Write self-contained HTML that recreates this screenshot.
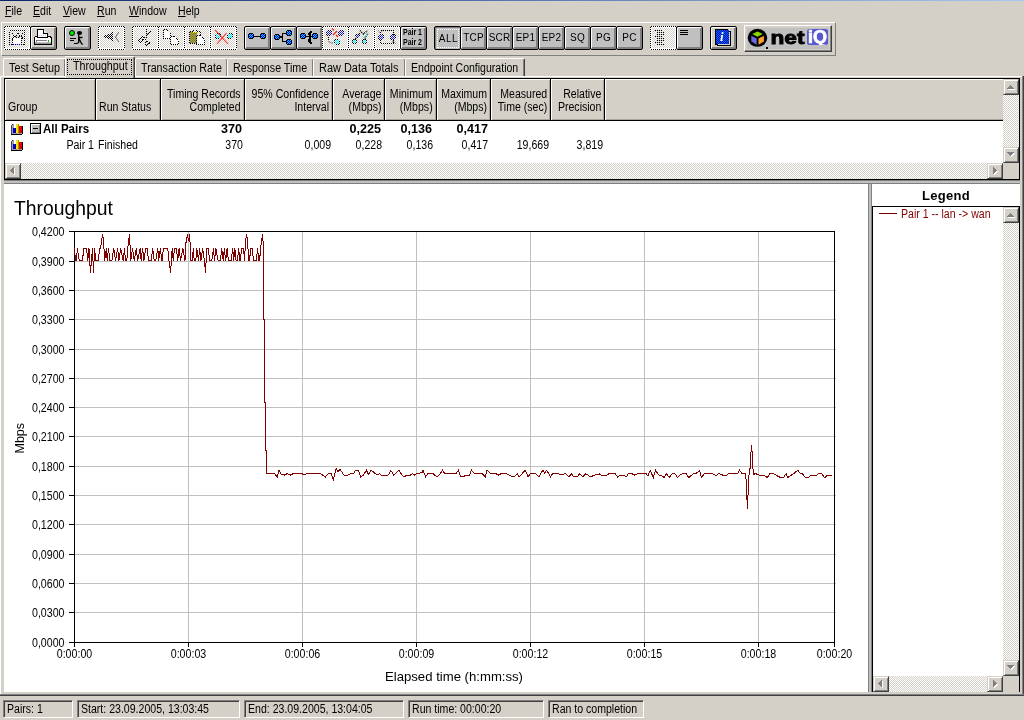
<!DOCTYPE html>
<html><head><meta charset="utf-8"><title>Throughput</title>
<style>
*{box-sizing:border-box;margin:0;padding:0}
html,body{width:1024px;height:720px;overflow:hidden;background:#d4d0c8}
body{position:relative;font-family:"Liberation Sans",sans-serif;font-size:12px;color:#000;line-height:13px}
.a{position:absolute}
.t{position:absolute;white-space:nowrap;transform:scaleX(.88);transform-origin:0 0}
.t.r{transform-origin:100% 0}
.sx{display:inline-block;transform:scaleX(.88);transform-origin:0 0}
u{text-decoration:underline;text-underline-offset:1px}
.chk{background-image:conic-gradient(#fff 25%,#d4d0c8 0 50%,#fff 0 75%,#d4d0c8 0);background-size:2px 2px}
/* toolbar buttons */
.b{position:absolute;top:26px;width:27px;height:24px;background:#c0c0c0;border:1px solid #000;border-radius:2px;box-shadow:inset 1px 1px 0 #fff,inset -1px -1px 0 #808080,inset -2px -2px 0 #808080}
.bd{position:absolute;top:26px;width:27px;height:24px;background:repeating-linear-gradient(90deg,#000 0 1px,#fff 1px 2px) 1px 0/25px 1px no-repeat,repeating-linear-gradient(90deg,#000 0 1px,#fff 1px 2px) 1px 100%/25px 1px no-repeat,repeating-linear-gradient(180deg,#000 0 1px,#fff 1px 2px) 0 1px/1px 22px no-repeat,repeating-linear-gradient(180deg,#000 0 1px,#fff 1px 2px) 100% 1px/1px 22px no-repeat,conic-gradient(#fff 25%,#d4d0c8 0 50%,#fff 0 75%,#d4d0c8 0) 0 0/2px 2px}
.bd:before{content:"";position:absolute;left:1px;top:1px;right:1px;bottom:1px;border:1px solid #fff}
.bd>svg{left:1px!important;top:1px!important}
.bt{font-size:10px;text-align:center;line-height:22px;letter-spacing:0.2px}
/* table */
.h{position:absolute;top:79px;height:41px;border-right:1px solid #000;box-shadow:inset 1px 1px 0 #fff,inset -1px -1px 0 #a8a49c;line-height:13px}
.r{text-align:right}
.tab{position:absolute;top:58px;height:18px;border-left:1px solid #fff;border-top:1px solid #fff;border-right:1px solid #404040;box-shadow:inset -1px 0 0 #808080;border-radius:2px 2px 0 0;font-size:12px;line-height:14px;white-space:nowrap;background:#d4d0c8}
.tab span{position:absolute;left:5px;top:2px;transform:scaleX(.89);transform-origin:0 0;letter-spacing:0}
.tab.sel{top:56px;height:22px}
.tab.sel span{left:7px;top:2px}
.sb{width:16px;height:16px;background:#d4d0c8;border:1px solid;border-color:#d4d0c8 #404040 #404040 #d4d0c8;box-shadow:inset 1px 1px 0 #fff,inset -1px -1px 0 #808080}
/* status panes */
.p{position:absolute;top:700px;height:18px;border:1px solid;border-color:#808080 #fff #fff #808080;box-shadow:inset 1px 1px 0 #404040;padding:2px 0 0 3px;white-space:nowrap}
#w{position:absolute;left:0;top:0;width:1024px;height:720px;will-change:transform}
</style></head><body><div id="w">
<!-- top line -->
<div class="a" style="left:0;top:0;width:1024px;height:1px;background:linear-gradient(90deg,#0a246a,#a6caf0)"></div>
<!-- menu -->
<div class="t" style="left:5px;top:5px"><u>F</u>ile</div>
<div class="t" style="left:33px;top:5px"><u>E</u>dit</div>
<div class="t" style="left:63px;top:5px"><u>V</u>iew</div>
<div class="t" style="left:97px;top:5px"><u>R</u>un</div>
<div class="t" style="left:129px;top:5px"><u>W</u>indow</div>
<div class="t" style="left:178px;top:5px"><u>H</u>elp</div>
<!-- toolbar frame -->
<div class="a" id="tb" style="left:1px;top:22px;width:835px;height:34px;border:1px solid;border-color:#fff #808080 #808080 #fff"></div>
<!-- TOOLBAR-BUTTONS -->
<svg width="0" height="0" style="position:absolute"><defs><pattern id="pb" width="2" height="2" patternUnits="userSpaceOnUse"><rect width="2" height="2" fill="#0000ff"/><rect width="1" height="1" fill="#00d0ff"/><rect x="1" y="1" width="1" height="1" fill="#00d0ff"/></pattern><pattern id="pd" width="2" height="2" patternUnits="userSpaceOnUse"><rect width="2" height="2" fill="#e8e8ff"/><rect width="1" height="1" fill="#2020ff"/><rect x="1" y="1" width="1" height="1" fill="#2020ff"/></pattern><pattern id="pc" width="2" height="2" patternUnits="userSpaceOnUse"><rect width="2" height="2" fill="#c8ffff"/><rect width="1" height="1" fill="#00f0ff"/><rect x="1" y="1" width="1" height="1" fill="#00f0ff"/></pattern><pattern id="pk" width="2" height="2" patternUnits="userSpaceOnUse"><rect width="1" height="1" fill="#000"/><rect x="1" y="1" width="1" height="1" fill="#000"/></pattern><pattern id="po" width="2" height="2" patternUnits="userSpaceOnUse"><rect width="2" height="2" fill="#a0a050"/><rect width="1" height="1" fill="#808020"/><rect x="1" y="1" width="1" height="1" fill="#808020"/></pattern><pattern id="pi" width="2" height="2" patternUnits="userSpaceOnUse"><rect width="2" height="2" fill="#0000ff"/><rect width="1" height="1" fill="#0070b0"/><rect x="1" y="1" width="1" height="1" fill="#0070b0"/></pattern></defs></svg>
<div class="bd chk" style="left:4px;"><svg class="a" style="left:0;top:0" width="25" height="22" viewBox="0 0 25 22" shape-rendering="crispEdges" ><g fill="none" stroke="#000" stroke-dasharray="1 1"><path d="M4.500 3.500h15v14h-15z"/><path d="M7 6.500l6 6M13 6.500l-6 6M13 6.500l5 5M18 6.500l-5 5"/></g><rect x="8" y="11" width="8" height="6" fill="#fff"/><path d="M7.500 11v7M16.500 11v7" stroke="#000" stroke-dasharray="1 1"/><path d="M8 17.500h8" stroke="#0000ff" stroke-dasharray="1 1"/></svg></div>
<div class="b" style="left:30px;background:#d4d0c8"><svg class="a" style="left:0;top:0" width="25" height="22" viewBox="0 0 25 22" shape-rendering="crispEdges" ><path d="M6.500 9.500v-7h6l4 4v3" fill="#fff" stroke="#000"/><path d="M12.500 2.500v4h4" fill="#e8e8e8" stroke="#000"/><path d="M8 8.500h8" stroke="#d0d0d0" stroke-dasharray="1 1"/><path d="M3.500 10.500l1-1h2v1h10v-1h2l2 1v7h-17z" fill="#fff" stroke="#000"/><path d="M4 15.500h16" stroke="#c0c0c0"/><path d="M4 16.500h16" stroke="#909090"/><path d="M5 13.500h11M5.500 13v2" stroke="#808080" fill="none"/><rect x="17" y="13" width="1" height="2" fill="#00c000"/></svg></div>
<div class="b" style="left:64px;"><svg class="a" style="left:0;top:0" width="25" height="22" viewBox="0 0 25 22" shape-rendering="crispEdges" ><g shape-rendering="auto"><circle cx="7" cy="6" r="2.500" fill="#00f000" stroke="#000"/><ellipse cx="14.500" cy="6" rx="2.600" ry="2.100" fill="#000"/><path d="M13.700 7.500V15.500L12 16.500M13.500 10.500H17.500M14 11.500L16.500 16.500L17.800 17.500" stroke="#000" fill="none" stroke-width="1.300"/></g><path d="M5 11.500h6M5 13.500h4M9 16.500h3" stroke="#000"/></svg></div>
<div class="bd chk" style="left:98px;"><svg class="a" style="left:0;top:0" width="25" height="22" viewBox="0 0 25 22" shape-rendering="crispEdges" ><path d="M4 9.500l10-4.500v9z" fill="url(#pk)"/><path d="M19.500 5.500l-3 4.500 3 4.500" fill="none" stroke="#000" stroke-dasharray="1.400 1" shape-rendering="auto"/></svg></div>
<div class="bd chk" style="left:132px;"><svg class="a" style="left:0;top:0" width="25" height="22" viewBox="0 0 25 22" shape-rendering="crispEdges" ><rect x="5" y="13" width="1" height="1"/><rect x="6" y="12" width="1" height="1"/><rect x="6" y="14" width="1" height="1"/><rect x="7" y="11" width="1" height="1"/><rect x="7" y="15" width="1" height="1"/><rect x="8" y="10" width="1" height="1"/><rect x="8" y="14" width="1" height="1"/><rect x="9" y="9" width="1" height="1"/><rect x="9" y="12" width="1" height="1"/><rect x="9" y="13" width="1" height="1"/><rect x="10" y="10" width="1" height="1"/><rect x="10" y="12" width="1" height="1"/><rect x="11" y="10" width="1" height="1"/><rect x="12" y="12" width="1" height="1"/><rect x="12" y="15" width="1" height="1"/><rect x="12" y="17" width="1" height="1"/><rect x="13" y="2" width="1" height="1"/><rect x="13" y="4" width="1" height="1"/><rect x="13" y="6" width="1" height="1"/><rect x="13" y="8" width="1" height="1"/><rect x="13" y="10" width="1" height="1"/><rect x="13" y="14" width="1" height="1"/><rect x="13" y="18" width="1" height="1"/><rect x="14" y="7" width="1" height="1"/><rect x="14" y="14" width="1" height="1"/><rect x="14" y="17" width="1" height="1"/><rect x="15" y="6" width="1" height="1"/><rect x="15" y="16" width="1" height="1"/><rect x="16" y="5" width="1" height="1"/><rect x="16" y="15" width="1" height="1"/><rect x="16" y="16" width="1" height="1"/><rect x="17" y="4" width="1" height="1"/></svg></div>
<div class="bd chk" style="left:158px;"><svg class="a" style="left:0;top:0" width="25" height="22" viewBox="0 0 25 22" shape-rendering="crispEdges" ><g fill="#fff" stroke="#000" stroke-dasharray="1 1"><path d="M4.500 2.500h3l4 4v5h-7z"/><path d="M11.500 9.500h4l4 4v4h-8z"/></g></svg></div>
<div class="bd chk" style="left:184px;"><svg class="a" style="left:0;top:0" width="25" height="22" viewBox="0 0 25 22" shape-rendering="crispEdges" ><rect x="5" y="5" width="7" height="11" fill="url(#po)"/><path d="M4.500 4.500h3l2.500-2.500 2.500 2.500h3v4M4.500 5v11.500h7" fill="none" stroke="#000" stroke-dasharray="1 1"/><path d="M8 5.500h5" stroke="#ffff00" stroke-dasharray="1 1"/><g fill="#fff" stroke="#000" stroke-dasharray="1 1"><path d="M11.500 8.500h4l4 4v5h-8z"/></g></svg></div>
<div class="bd chk" style="left:210px;"><svg class="a" style="left:0;top:0" width="25" height="22" viewBox="0 0 25 22" shape-rendering="crispEdges" ><rect x="5" y="6" width="4" height="6" fill="url(#pk)"/><rect x="4" y="7" width="6" height="4" fill="url(#pk)"/><rect x="5" y="7" width="4" height="4" fill="#fff"/><rect x="5" y="7" width="4" height="4" fill="url(#pc)"/><rect x="17" y="6" width="4" height="6" fill="url(#pk)"/><rect x="16" y="7" width="6" height="4" fill="url(#pk)"/><rect x="17" y="7" width="4" height="4" fill="#fff"/><rect x="17" y="7" width="4" height="4" fill="url(#pc)"/><path d="M4 3l13 14M15.500 6l-9.500 11" stroke="#ff2020" stroke-width="1.100" shape-rendering="auto"/></svg></div>
<div class="b" style="left:244px;"><svg class="a" style="left:0;top:0" width="25" height="22" viewBox="0 0 25 22" shape-rendering="crispEdges" ><path d="M9 9.500h6" stroke="#000"/><rect x="4" y="6" width="4" height="6" fill="#000"/><rect x="3" y="7" width="6" height="4" fill="#000"/><rect x="4" y="7" width="4" height="4" fill="url(#pb)"/><rect x="16" y="6" width="4" height="6" fill="#000"/><rect x="15" y="7" width="6" height="4" fill="#000"/><rect x="16" y="7" width="4" height="4" fill="url(#pb)"/></svg></div>
<div class="b" style="left:270px;"><svg class="a" style="left:0;top:0" width="25" height="22" viewBox="0 0 25 22" shape-rendering="crispEdges" ><path d="M11.500 6v9M11 6.500h4M11 14.500h4" stroke="#000" fill="none"/><rect x="9" y="9" width="3" height="2" fill="#000"/><rect x="4" y="7" width="4" height="6" fill="#000"/><rect x="3" y="8" width="6" height="4" fill="#000"/><rect x="4" y="8" width="4" height="4" fill="url(#pb)"/><rect x="16" y="3" width="4" height="6" fill="#000"/><rect x="15" y="4" width="6" height="4" fill="#000"/><rect x="16" y="4" width="4" height="4" fill="url(#pb)"/><rect x="16" y="12" width="4" height="6" fill="#000"/><rect x="15" y="13" width="6" height="4" fill="#000"/><rect x="16" y="13" width="4" height="4" fill="url(#pb)"/></svg></div>
<div class="b" style="left:296px;"><svg class="a" style="left:0;top:0" width="25" height="22" viewBox="0 0 25 22" shape-rendering="crispEdges" ><path d="M13 4h2v2h-1v9h1v2h-2l-2-2v-3h1v-4h-1v-2z" fill="#000"/><path d="M9 9.500h6" stroke="#000"/><rect x="4" y="6" width="4" height="6" fill="#000"/><rect x="3" y="7" width="6" height="4" fill="#000"/><rect x="4" y="7" width="4" height="4" fill="url(#pb)"/><rect x="16" y="6" width="4" height="6" fill="#000"/><rect x="15" y="7" width="6" height="4" fill="#000"/><rect x="16" y="7" width="4" height="4" fill="url(#pb)"/></svg></div>
<div class="bd chk" style="left:322px;"><svg class="a" style="left:0;top:0" width="25" height="22" viewBox="0 0 25 22" shape-rendering="crispEdges" ><rect x="4" y="3" width="4" height="6" fill="url(#pk)"/><rect x="3" y="4" width="6" height="4" fill="url(#pk)"/><rect x="4" y="4" width="4" height="4" fill="#fff"/><rect x="4" y="4" width="4" height="4" fill="url(#pd)"/><rect x="16" y="3" width="4" height="6" fill="url(#pk)"/><rect x="15" y="4" width="6" height="4" fill="url(#pk)"/><rect x="16" y="4" width="4" height="4" fill="#fff"/><rect x="16" y="4" width="4" height="4" fill="url(#pd)"/><rect x="12" y="12" width="4" height="6" fill="url(#pk)"/><rect x="11" y="13" width="6" height="4" fill="url(#pk)"/><rect x="12" y="13" width="4" height="4" fill="#fff"/><rect x="12" y="13" width="4" height="4" fill="url(#pc)"/><path d="M9 1.500l2 2M14 4l-4 4M13 8l2 2" stroke="#ff2020" stroke-width="1.200" shape-rendering="auto"/><path d="M5.500 10v4l2 2h3" fill="none" stroke="#000" stroke-dasharray="1 1" shape-rendering="auto"/></svg></div>
<div class="bd chk" style="left:348px;"><svg class="a" style="left:0;top:0" width="25" height="22" viewBox="0 0 25 22" shape-rendering="crispEdges" ><path d="M4 15l7-9M14 15l5-9M11 3.500l3.500 3.500 4-3.500" fill="none" stroke="#000" stroke-dasharray="1 1" stroke-width="1.500" shape-rendering="auto"/><rect x="7" y="7" width="3" height="4" fill="url(#pk)"/><rect x="6" y="8" width="5" height="2" fill="url(#pk)"/><rect x="7" y="8" width="3" height="2" fill="#fff"/><rect x="7" y="8" width="3" height="2" fill="url(#pd)"/><rect x="4" y="12" width="3" height="5" fill="url(#pk)"/><rect x="3" y="13" width="5" height="3" fill="url(#pk)"/><rect x="4" y="13" width="3" height="3" fill="#fff"/><rect x="4" y="13" width="3" height="3" fill="url(#pc)"/><rect x="14" y="12" width="3" height="5" fill="url(#pk)"/><rect x="13" y="13" width="5" height="3" fill="url(#pk)"/><rect x="14" y="13" width="3" height="3" fill="#fff"/><rect x="14" y="13" width="3" height="3" fill="url(#pc)"/><path d="M15 11l3-4" stroke="#00f0ff" stroke-dasharray="1 1" stroke-width="1.500" shape-rendering="auto"/></svg></div>
<div class="bd chk" style="left:374px;"><svg class="a" style="left:0;top:0" width="25" height="22" viewBox="0 0 25 22" shape-rendering="crispEdges" ><path d="M5.500 3.500h13v13h-13z" fill="none" stroke="#000" stroke-dasharray="1 1"/><path d="M3.500 3.500l2 2.500 2-2.500M16.500 16.500l2-2.500 2 2.500" fill="none" stroke="#000" stroke-dasharray="1 1" shape-rendering="auto"/><rect x="4" y="7" width="4" height="6" fill="url(#pk)"/><rect x="3" y="8" width="6" height="4" fill="url(#pk)"/><rect x="4" y="8" width="4" height="4" fill="#fff"/><rect x="4" y="8" width="4" height="4" fill="url(#pd)"/><rect x="16" y="7" width="4" height="6" fill="url(#pk)"/><rect x="15" y="8" width="6" height="4" fill="url(#pk)"/><rect x="16" y="8" width="4" height="4" fill="#fff"/><rect x="16" y="8" width="4" height="4" fill="url(#pd)"/></svg></div>
<div class="b" style="left:400px;"><div class="t" style="left:2px;top:0px;font-size:8.500px;line-height:10px;font-weight:bold;transform:scaleX(.82)">Pair 1<br>Pair 2</div></div>
<div class="b" style="left:434px;box-shadow:inset 1px 1px 0 #808080"><div class="a" style="left:2px;top:2px;width:22px;height:19px;border:1px dotted #fff"></div><div class="bt" style="padding:1px 0 0 2px;letter-spacing:.5px">ALL</div></div>
<div class="b" style="left:460px;"><div class="bt">TCP</div></div>
<div class="b" style="left:486px;"><div class="bt">SCR</div></div>
<div class="b" style="left:512px;"><div class="bt">EP1</div></div>
<div class="b" style="left:538px;"><div class="bt">EP2</div></div>
<div class="b" style="left:564px;"><div class="bt">SQ</div></div>
<div class="b" style="left:590px;"><div class="bt">PG</div></div>
<div class="b" style="left:616px;"><div class="bt">PC</div></div>
<div class="bd chk" style="left:650px;"><svg class="a" style="left:0;top:0" width="25" height="22" viewBox="0 0 25 22" shape-rendering="crispEdges" ><path d="M6.500 3v16" stroke="#000" stroke-dasharray="1 1"/><path d="M8.500 3v16" stroke="#000" stroke-dasharray="1 1"/><path d="M10.500 3v16" stroke="#000" stroke-dasharray="1 1"/><path d="M4.500 3v1M4.500 9v1M4.500 15v1M12.500 5v3M12.500 11v3M12.500 17v1" stroke="#000" stroke-dasharray="1 1"/></svg></div>
<div class="b" style="left:676px;"><svg class="a" style="left:0;top:0" width="25" height="22" viewBox="0 0 25 22" shape-rendering="crispEdges" ><path d="M3 3.500h8M3 5.500h8M3 7.500h8" stroke="#000"/></svg></div>
<div class="b" style="left:710px;background:#d4d0c8"><svg class="a" style="left:0;top:0" width="25" height="22" viewBox="0 0 25 22" shape-rendering="crispEdges" ><rect x="6.500" y="4.500" width="13" height="14" fill="#d4d0c8" stroke="#000"/><rect x="5" y="3" width="13" height="14" fill="url(#pi)"/><path d="M17 2.500h-12.500v15h1" stroke="#000" fill="none"/></svg><div class="t" style="transform:none;left:9px;top:3px;color:#fff;font:italic bold 13px/14px 'Liberation Serif',serif">i</div></div>
<div class="a" style="left:744px;top:25px;width:88px;height:27px;background:#c0c0c0;border:1px solid;border-color:#fff #404040 #404040 #fff;box-shadow:inset -1px -1px 0 #808080,inset 0 0 0 2px #d4d0c8"><svg class="a" style="left:0;top:0" width="86" height="25" viewBox="745 26 86 25"><ellipse cx="757.500" cy="37.800" rx="9.800" ry="9" fill="#000"/><path d="M757.500 31.500l5.200 2.600-5.200 2.700-5.200-2.700z" fill="#88d800"/><path d="M751.300 35.800l5.400 2.700v6.300l-5.400-3.200z" fill="#6868e0"/><path d="M763.900 35.800l-5.400 2.700v6.300l5.400-3.200z" fill="#ffa030"/><rect x="766" y="47" width="2" height="2" fill="#000"/><clipPath id="cq"><rect x="807" y="29" width="21" height="16" rx="2.500"/></clipPath><rect x="807" y="29" width="21" height="16" rx="2.500" fill="#5858d0"/><text x="770.500" y="44" font-family="Liberation Sans, sans-serif" font-weight="bold" font-size="19" textLength="34" lengthAdjust="spacingAndGlyphs" stroke="#000" stroke-width="0.900">net</text><text clip-path="url(#cq)" x="808" y="43.300" font-family="Liberation Sans, sans-serif" font-weight="bold" font-size="17.500" textLength="19" lengthAdjust="spacingAndGlyphs" fill="#fff" stroke="#fff" stroke-width="0.700">iQ</text></svg></div>
<!-- /TOOLBAR-BUTTONS -->
<!-- TABS -->
<div class="a" style="left:0;top:76px;width:1022px;height:1px;background:#fff"></div>
<div class="a" style="left:1022px;top:76px;width:1px;height:619px;background:#808080"></div><div class="a" style="left:1023px;top:76px;width:1px;height:620px;background:#404040"></div>
<div class="a" style="left:0;top:76px;width:1px;height:618px;background:#fff"></div>
<div class="tab" style="left:3px;width:63px"><span style="transform:scaleX(0.9)">Test Setup</span></div>
<div class="tab" style="left:135px;width:93px"><span style="transform:scaleX(0.89)">Transaction Rate</span></div>
<div class="tab" style="left:227px;width:87px"><span style="transform:scaleX(0.89)">Response Time</span></div>
<div class="tab" style="left:313px;width:93px"><span style="transform:scaleX(0.912)">Raw Data Totals</span></div>
<div class="tab" style="left:405px;width:120px"><span style="transform:scaleX(0.878)">Endpoint Configuration</span></div>
<div class="tab sel" style="left:65px;width:70px"><div class="a" style="left:1px;top:2px;width:65px;height:16px;border:1px dotted #000"></div><span>Throughput</span></div>
<!-- /TABS -->
<!-- TABLE -->
<div class="a" style="left:4px;top:78px;width:1016px;height:102px;border:1px solid #000;background:#fff"></div>
<div class="a" style="left:5px;top:79px;width:998px;height:41px;background:#d4d0c8"></div><div class="a" style="left:605px;top:79px;width:398px;height:41px;box-shadow:inset 1px 1px 0 #fff,inset 0 -1px 0 #a8a49c"></div>
<div class="a" style="left:5px;top:120px;width:998px;height:1px;background:#000"></div>
<div class="h" style="left:5px;width:91px"><div class="t" style="left:3px;bottom:6px">Group</div></div>
<div class="h" style="left:96px;width:65px"><div class="t" style="left:3px;bottom:6px">Run Status</div></div>
<div class="h" style="left:161px;width:84px"><div class="t r" style="right:3px;bottom:6px">Timing Records<br>Completed</div></div>
<div class="h" style="left:245px;width:88px"><div class="t r" style="right:3px;bottom:6px">95% Confidence<br>Interval</div></div>
<div class="h" style="left:333px;width:52px"><div class="t r" style="right:3px;bottom:6px">Average<br>(Mbps)</div></div>
<div class="h" style="left:385px;width:52px"><div class="t r" style="right:3px;bottom:6px">Minimum<br>(Mbps)</div></div>
<div class="h" style="left:437px;width:54px"><div class="t r" style="right:3px;bottom:6px">Maximum<br>(Mbps)</div></div>
<div class="h" style="left:491px;width:60px"><div class="t r" style="right:3px;bottom:6px">Measured<br>Time (sec)</div></div>
<div class="h" style="left:551px;width:54px"><div class="t r" style="right:3px;bottom:6px">Relative<br>Precision</div></div>
<svg class="a" style="left:11px;top:123px" width="12" height="12" viewBox="0 0 12 12" shape-rendering="crispEdges"><path d="M0.500 11V2.500L2 1V10" fill="none" stroke="#404040" shape-rendering="auto"/><path d="M1 10.500h10" stroke="#a0a0a0"/><path d="M0 11.500h11M11.500 3v8" stroke="#000" fill="none"/><rect x="2" y="5" width="3" height="5" fill="#0000e8"/><rect x="5" y="1" width="3" height="9" fill="#f0e800"/><rect x="8" y="3" width="3" height="7" fill="#e80000"/><path d="M4.500 5v5M7.500 1v9" stroke="#000" opacity=".35"/></svg>
<svg class="a" style="left:11px;top:139px" width="12" height="12" viewBox="0 0 12 12" shape-rendering="crispEdges"><path d="M0.500 11V2.500L2 1V10" fill="none" stroke="#404040" shape-rendering="auto"/><path d="M1 10.500h10" stroke="#a0a0a0"/><path d="M0 11.500h11M11.500 3v8" stroke="#000" fill="none"/><rect x="2" y="5" width="3" height="5" fill="#0000e8"/><rect x="5" y="1" width="3" height="9" fill="#f0e800"/><rect x="8" y="3" width="3" height="7" fill="#e80000"/><path d="M4.500 5v5M7.500 1v9" stroke="#000" opacity=".35"/></svg>
<div class="a" style="left:30px;top:123px;width:11px;height:11px;border:1px solid #000;background:#c0c0c0;box-shadow:inset 1px 1px 0 #fff,inset -1px -1px 0 #808080"><div class="a" style="left:2px;top:4px;width:5px;height:1px;background:#000"></div></div>
<div class="t" style="left:43px;top:123px;font-weight:bold;transform:scaleX(.96)">All Pairs</div>
<div class="t r" style="left:162px;width:80px;top:123px;font-weight:bold;transform:scaleX(1.05)">370</div>
<div class="t r" style="left:301px;width:80px;top:123px;font-weight:bold;transform:scaleX(1.05)">0,225</div>
<div class="t r" style="left:352px;width:80px;top:123px;font-weight:bold;transform:scaleX(1.05)">0,136</div>
<div class="t r" style="left:408px;width:80px;top:123px;font-weight:bold;transform:scaleX(1.05)">0,417</div>
<div class="t r" style="left:14px;width:80px;top:139px">Pair 1</div>
<div class="t" style="left:98px;top:139px">Finished</div>
<div class="t r" style="left:163px;width:80px;top:139px">370</div>
<div class="t r" style="left:251px;width:80px;top:139px">0,009</div>
<div class="t r" style="left:302px;width:80px;top:139px">0,228</div>
<div class="t r" style="left:353px;width:80px;top:139px">0,136</div>
<div class="t r" style="left:408px;width:80px;top:139px">0,417</div>
<div class="t r" style="left:469px;width:80px;top:139px">19,669</div>
<div class="t r" style="left:523px;width:80px;top:139px">3,819</div>
<div class="a chk" style="left:1003px;top:79px;width:16px;height:84px"></div>
<div class="a chk" style="left:5px;top:163px;width:998px;height:16px"></div>
<div class="a" style="left:1003px;top:163px;width:16px;height:16px;background:#d4d0c8"></div>
<div class="a sb" style="left:1003px;top:79px"><svg class="a" style="left:-1px;top:-1px" width="16" height="16" viewBox="0 0 16 16" shape-rendering="crispEdges"><rect x="8" y="7" width="1" height="1" fill="#fff"/><rect x="7" y="8" width="3" height="1" fill="#fff"/><rect x="6" y="9" width="5" height="1" fill="#fff"/><rect x="5" y="10" width="7" height="1" fill="#fff"/><rect x="7" y="6" width="1" height="1" fill="#808080"/><rect x="6" y="7" width="3" height="1" fill="#808080"/><rect x="5" y="8" width="5" height="1" fill="#808080"/><rect x="4" y="9" width="7" height="1" fill="#808080"/></svg></div>
<div class="a sb" style="left:1003px;top:147px"><svg class="a" style="left:-1px;top:-1px" width="16" height="16" viewBox="0 0 16 16" shape-rendering="crispEdges"><rect x="8" y="9" width="1" height="1" fill="#fff"/><rect x="7" y="8" width="3" height="1" fill="#fff"/><rect x="6" y="7" width="5" height="1" fill="#fff"/><rect x="5" y="6" width="7" height="1" fill="#fff"/><rect x="7" y="8" width="1" height="1" fill="#808080"/><rect x="6" y="7" width="3" height="1" fill="#808080"/><rect x="5" y="6" width="5" height="1" fill="#808080"/><rect x="4" y="5" width="7" height="1" fill="#808080"/></svg></div>
<div class="a sb" style="left:5px;top:163px"><svg class="a" style="left:-1px;top:-1px" width="16" height="16" viewBox="0 0 16 16" shape-rendering="crispEdges"><rect x="6" y="8" width="1" height="1" fill="#fff"/><rect x="7" y="7" width="1" height="3" fill="#fff"/><rect x="8" y="6" width="1" height="5" fill="#fff"/><rect x="9" y="5" width="1" height="7" fill="#fff"/><rect x="5" y="7" width="1" height="1" fill="#808080"/><rect x="6" y="6" width="1" height="3" fill="#808080"/><rect x="7" y="5" width="1" height="5" fill="#808080"/><rect x="8" y="4" width="1" height="7" fill="#808080"/></svg></div>
<div class="a sb" style="left:987px;top:163px"><svg class="a" style="left:-1px;top:-1px" width="16" height="16" viewBox="0 0 16 16" shape-rendering="crispEdges"><rect x="10" y="8" width="1" height="1" fill="#fff"/><rect x="9" y="7" width="1" height="3" fill="#fff"/><rect x="8" y="6" width="1" height="5" fill="#fff"/><rect x="7" y="5" width="1" height="7" fill="#fff"/><rect x="9" y="7" width="1" height="1" fill="#808080"/><rect x="8" y="6" width="1" height="3" fill="#808080"/><rect x="7" y="5" width="1" height="5" fill="#808080"/><rect x="6" y="4" width="1" height="7" fill="#808080"/></svg></div>
<!-- /TABLE -->
<!-- CHART -->
<div class="a" style="left:4px;top:180px;width:1016px;height:4px;background:#c0c0c0;border-top:1px solid #808080;border-bottom:1px solid #808080"></div>
<div class="a" style="left:4px;top:184px;width:864px;height:508px;background:#fff"></div>
<div class="a" style="left:868px;top:184px;width:4px;height:508px;background:#c0c0c0;border-left:1px solid #808080;border-right:1px solid #808080"></div>
<svg class="a" style="left:0;top:184px" width="868" height="508" viewBox="0 184 868 508" font-family="Liberation Sans, sans-serif">
<path d="M74 612.5H836M74 583.5H836M74 554.5H836M74 524.5H836M74 495.5H836M74 466.5H836M74 436.5H836M74 407.5H836M74 378.5H836M74 349.5H836M74 319.5H836M74 290.5H836M74 261.5H836M188.5 231V642M302.5 231V642M416.5 231V642M530.5 231V642M644.5 231V642M758.5 231V642" stroke="#c0c0c0" fill="none" shape-rendering="crispEdges"/>
<path d="M74.5 231V647M69 642.5H835M74 231.5H835M834.5 231V642M69 612.5H74M69 583.5H74M69 554.5H74M69 524.5H74M69 495.5H74M69 466.5H74M69 436.5H74M69 407.5H74M69 378.5H74M69 349.5H74M69 319.5H74M69 290.5H74M69 261.5H74M69 231.5H74M188.5 642V647M302.5 642V647M416.5 642V647M530.5 642V647M644.5 642V647M758.5 642V647M834.5 642V647" stroke="#000" fill="none" shape-rendering="crispEdges"/>
<text x="64.500" y="647" font-size="12.300" text-anchor="end" textLength="32.500" lengthAdjust="spacingAndGlyphs">0,0000</text>
<text x="64.500" y="617" font-size="12.300" text-anchor="end" textLength="32.500" lengthAdjust="spacingAndGlyphs">0,0300</text>
<text x="64.500" y="588" font-size="12.300" text-anchor="end" textLength="32.500" lengthAdjust="spacingAndGlyphs">0,0600</text>
<text x="64.500" y="559" font-size="12.300" text-anchor="end" textLength="32.500" lengthAdjust="spacingAndGlyphs">0,0900</text>
<text x="64.500" y="529" font-size="12.300" text-anchor="end" textLength="32.500" lengthAdjust="spacingAndGlyphs">0,1200</text>
<text x="64.500" y="500" font-size="12.300" text-anchor="end" textLength="32.500" lengthAdjust="spacingAndGlyphs">0,1500</text>
<text x="64.500" y="471" font-size="12.300" text-anchor="end" textLength="32.500" lengthAdjust="spacingAndGlyphs">0,1800</text>
<text x="64.500" y="441" font-size="12.300" text-anchor="end" textLength="32.500" lengthAdjust="spacingAndGlyphs">0,2100</text>
<text x="64.500" y="412" font-size="12.300" text-anchor="end" textLength="32.500" lengthAdjust="spacingAndGlyphs">0,2400</text>
<text x="64.500" y="383" font-size="12.300" text-anchor="end" textLength="32.500" lengthAdjust="spacingAndGlyphs">0,2700</text>
<text x="64.500" y="354" font-size="12.300" text-anchor="end" textLength="32.500" lengthAdjust="spacingAndGlyphs">0,3000</text>
<text x="64.500" y="324" font-size="12.300" text-anchor="end" textLength="32.500" lengthAdjust="spacingAndGlyphs">0,3300</text>
<text x="64.500" y="295" font-size="12.300" text-anchor="end" textLength="32.500" lengthAdjust="spacingAndGlyphs">0,3600</text>
<text x="64.500" y="266" font-size="12.300" text-anchor="end" textLength="32.500" lengthAdjust="spacingAndGlyphs">0,3900</text>
<text x="64.500" y="236" font-size="12.300" text-anchor="end" textLength="32.500" lengthAdjust="spacingAndGlyphs">0,4200</text>
<text x="74.5" y="658" font-size="12.300" text-anchor="middle" textLength="35.500" lengthAdjust="spacingAndGlyphs">0:00:00</text>
<text x="188.5" y="658" font-size="12.300" text-anchor="middle" textLength="35.500" lengthAdjust="spacingAndGlyphs">0:00:03</text>
<text x="302.5" y="658" font-size="12.300" text-anchor="middle" textLength="35.500" lengthAdjust="spacingAndGlyphs">0:00:06</text>
<text x="416.5" y="658" font-size="12.300" text-anchor="middle" textLength="35.500" lengthAdjust="spacingAndGlyphs">0:00:09</text>
<text x="530.5" y="658" font-size="12.300" text-anchor="middle" textLength="35.500" lengthAdjust="spacingAndGlyphs">0:00:12</text>
<text x="644.5" y="658" font-size="12.300" text-anchor="middle" textLength="35.500" lengthAdjust="spacingAndGlyphs">0:00:15</text>
<text x="758.5" y="658" font-size="12.300" text-anchor="middle" textLength="35.500" lengthAdjust="spacingAndGlyphs">0:00:18</text>
<text x="834.5" y="658" font-size="12.300" text-anchor="middle" textLength="35.500" lengthAdjust="spacingAndGlyphs">0:00:20</text>
<text x="385" y="681" font-size="13" textLength="138" lengthAdjust="spacingAndGlyphs">Elapsed time (h:mm:ss)</text>
<text x="14" y="215" font-size="19.500" textLength="99" lengthAdjust="spacingAndGlyphs">Throughput</text>
<text transform="translate(24 453.500) rotate(-90)" font-size="12.500">Mbps</text>
<path d="M74.5 248.4 75.5 260.6 76.3 260.6 77.4 248.4 79.2 260.6 82.6 260.6 83.6 248.4 86.6 248.4 87.8 260.6 89 248.4 90.4 272.6 92.5 248.4 93.5 272.6 94.6 248.4 95.6 260.6 98.4 260.6 99.5 248.4 100.6 248.4 101.5 241 102.5 234.4 103.6 241 104.6 260.6 106.4 248.4 107.2 260.6 108.5 248.4 109.8 260.6 111.9 260.6 113.8 248.4 115.5 260.6 117.6 248.4 119 260.6 120.7 248.4 123.1 260.6 124.5 248.4 125.5 260.6 126.8 260.6 127.8 248.4 128.6 241 129.5 234.4 130.8 260.6 132.5 248.4 134.2 260.6 136.3 248.4 137.7 260.6 140.1 248.4 141.2 260.6 142.6 248.4 144 260.6 145.6 248.4 147.4 248.4 148.4 260.6 151.4 260.6 152.6 248.4 154.2 260.6 155.8 260.6 157.8 248.4 158.7 260.6 160.3 248.4 162 260.6 163.5 248.4 167.7 248.4 169 260.6 170.6 272.6 172.2 248.4 173.2 260.6 174.5 248.4 176.5 248.4 177.7 260.6 179.1 248.4 180.5 260.6 182.9 248.4 185 260.6 186.1 241 187.6 234.4 188.4 241 189.6 234.4 190.4 248.4 191 260.6 192.3 260.6 193.3 248.4 194.2 260.6 195.8 260.6 196.8 248.4 198.5 260.6 199.6 248.4 201 260.6 202.7 248.4 204.4 260.6 205.5 272.6 206.8 248.4 208.4 248.4 209.5 260.6 211.8 260.6 213.5 248.4 214.5 260.6 215.9 248.4 218.1 260.6 220.5 260.6 221.6 248.4 223.3 260.6 224.3 248.4 225.7 260.6 227.1 248.4 228.4 260.6 231.1 260.6 232.7 248.4 233.7 260.6 234.8 248.4 236.1 260.6 237.5 260.6 238.6 248.4 240 260.6 242 248.4 243.6 248.4 244.5 260.6 245.5 241 246.6 234.4 247.6 241 248.6 260.6 249.6 260.6 250.6 248.4 252.3 248.4 253.5 260.6 256.1 260.6 257.7 248.4 258.6 260.6 259.6 260.6 260.6 248.4 261.5 241 262.5 234.4 263.5 248 263.5 319 264.5 319 264.5 402 265.5 402 265.5 450 266.5 450 266.5 473.5 267.5 473.5 274.6 473.6 277.2 476.9 278.9 470.2 281.1 474.5 284.4 475.1 287.3 473.6 290.3 475.1 293.2 473.6 302 473.6 303.9 475.1 306.9 473.6 320.5 473.6 325.4 476.9 328.4 473.6 331.3 473.9 333.2 480 336.2 468.3 338.1 471.6 340.1 469.6 344 475.1 347.9 475.1 350.8 473.6 353.8 473.2 355.7 470.2 358.6 470.6 360.6 476.9 363.5 475.1 366.4 470.2 368.4 474.5 371.3 470.2 377.2 475.1 379.5 473.9 382.1 475.5 387.9 475.5 390.9 470.6 393.8 475.1 398.7 470.2 403.6 476.9 406.5 475.5 410.4 475.1 412.3 473.6 414.3 475.1 416.2 473.9 422.1 472.6 423.1 470.2 425.6 476.9 428 473.6 432.9 473.6 436.8 476.9 439.7 474.5 442.6 470.2 444.6 473.6 455.9 473.6 458.4 470.2 460.7 476.9 463.7 476.5 465.6 475.1 469.5 475.1 471.5 470.2 474.4 473.2 482.2 473.6 485.2 476.9 487.1 470.2 490 473.2 495.9 473.6 498.4 475.1 501.2 473.6 506.6 473.6 512.5 476.9 514.5 476.9 517.4 473.6 519.3 476.9 525.2 470.2 528.1 476.9 530.5 473.6 535.9 473.6 538.9 476.9 542.8 470.2 544.7 473.2 546.7 470.2 550.6 476.9 552.5 473.6 558.4 473.6 560.9 475.1 565.2 473.6 569.1 476.9 571.1 473.6 574 476.9 577 476.9 579.9 473.6 582.8 476.9 585.7 473.6 590.6 476.9 594.5 475.1 599.4 473.9 601.4 475.1 607.2 475.1 609.2 473.6 615 473.6 617.6 476.9 619.9 475.5 623.8 475.1 626.8 476.9 628.1 473.6 631.6 473.6 634.6 475.1 637.5 473.6 645.9 473.5 647.8 476 650.2 470.2 653.3 477.6 655.6 470.2 658.6 475 661.5 475.6 664.4 477.6 666.4 473.5 669.3 477.6 672.2 473.5 674.8 473.5 677.5 477.6 680 475 683.9 473.1 685.9 473.5 688.8 477.6 693.7 473.5 696.6 473.1 699.6 470.2 701.5 477.6 704.5 473.5 712.3 473.5 715.8 475.6 719.1 473.5 724 475.6 725.9 475.6 728.9 473.5 737.7 473.5 739.6 470.2 741.6 473.1 745.5 473.5 746.4 483.8 747.4 509.2 748.4 485.8 749.4 469.2 750.4 468.2 751.3 444.8 752.3 453.6 753.3 475 755.2 473.5 759.1 475 762.1 475.6 765 476 767.3 477.6 769.9 473.5 772.8 473.5 780.6 477.6 783.6 477.6 786.1 473.5 787.5 477.6 794.3 473.1 797.8 470.2 800.2 473.5 802.1 473.5 805.6 477.6 808 477.6 810.9 475.6 816.8 475 818.7 473.5 821.6 473.5 824.6 477.6 827.1 475.6 832.4 475.4" stroke="#800000" stroke-width="1" fill="none" stroke-linejoin="miter" shape-rendering="crispEdges"/>
</svg>
<!-- /CHART -->
<!-- LEGEND -->
<div class="a" style="left:872px;top:184px;width:148px;height:508px;background:#fff"></div>
<div class="t" style="left:872px;width:148px;top:188px;text-align:center;font-weight:bold;font-size:13px;line-height:15px;letter-spacing:0.3px;transform:none">Legend</div>
<div class="a" style="left:872px;top:206px;width:148px;height:486px;border:1px solid #000;border-bottom:0;background:#fff"></div>
<div class="a" style="left:879px;top:213px;width:18px;height:1px;background:#800000"></div>
<div class="t" style="left:901px;top:208px;color:#800000">Pair 1 -- lan -&gt; wan</div>
<div class="a chk" style="left:1003px;top:207px;width:16px;height:469px"></div>
<div class="a chk" style="left:873px;top:676px;width:130px;height:16px"></div>
<div class="a" style="left:1003px;top:676px;width:16px;height:16px;background:#d4d0c8"></div>
<div class="a sb" style="left:1003px;top:207px"><svg class="a" style="left:-1px;top:-1px" width="16" height="16" viewBox="0 0 16 16" shape-rendering="crispEdges"><rect x="8" y="7" width="1" height="1" fill="#fff"/><rect x="7" y="8" width="3" height="1" fill="#fff"/><rect x="6" y="9" width="5" height="1" fill="#fff"/><rect x="5" y="10" width="7" height="1" fill="#fff"/><rect x="7" y="6" width="1" height="1" fill="#808080"/><rect x="6" y="7" width="3" height="1" fill="#808080"/><rect x="5" y="8" width="5" height="1" fill="#808080"/><rect x="4" y="9" width="7" height="1" fill="#808080"/></svg></div>
<div class="a sb" style="left:1003px;top:660px"><svg class="a" style="left:-1px;top:-1px" width="16" height="16" viewBox="0 0 16 16" shape-rendering="crispEdges"><rect x="8" y="9" width="1" height="1" fill="#fff"/><rect x="7" y="8" width="3" height="1" fill="#fff"/><rect x="6" y="7" width="5" height="1" fill="#fff"/><rect x="5" y="6" width="7" height="1" fill="#fff"/><rect x="7" y="8" width="1" height="1" fill="#808080"/><rect x="6" y="7" width="3" height="1" fill="#808080"/><rect x="5" y="6" width="5" height="1" fill="#808080"/><rect x="4" y="5" width="7" height="1" fill="#808080"/></svg></div>
<div class="a sb" style="left:873px;top:676px"><svg class="a" style="left:-1px;top:-1px" width="16" height="16" viewBox="0 0 16 16" shape-rendering="crispEdges"><rect x="6" y="8" width="1" height="1" fill="#fff"/><rect x="7" y="7" width="1" height="3" fill="#fff"/><rect x="8" y="6" width="1" height="5" fill="#fff"/><rect x="9" y="5" width="1" height="7" fill="#fff"/><rect x="5" y="7" width="1" height="1" fill="#808080"/><rect x="6" y="6" width="1" height="3" fill="#808080"/><rect x="7" y="5" width="1" height="5" fill="#808080"/><rect x="8" y="4" width="1" height="7" fill="#808080"/></svg></div>
<div class="a sb" style="left:987px;top:676px"><svg class="a" style="left:-1px;top:-1px" width="16" height="16" viewBox="0 0 16 16" shape-rendering="crispEdges"><rect x="10" y="8" width="1" height="1" fill="#fff"/><rect x="9" y="7" width="1" height="3" fill="#fff"/><rect x="8" y="6" width="1" height="5" fill="#fff"/><rect x="7" y="5" width="1" height="7" fill="#fff"/><rect x="9" y="7" width="1" height="1" fill="#808080"/><rect x="8" y="6" width="1" height="3" fill="#808080"/><rect x="7" y="5" width="1" height="5" fill="#808080"/><rect x="6" y="4" width="1" height="7" fill="#808080"/></svg></div>
<!-- /LEGEND -->
<!-- STATUS -->
<div class="a" style="left:0;top:694px;width:1024px;height:1px;background:#808080"></div><div class="a" style="left:0;top:695px;width:1024px;height:1px;background:#404040"></div>
<div class="a" style="left:0;top:696px;width:1024px;height:24px;background:#d4d0c8"></div>
<div class="p" style="left:3px;width:70px"><span class="sx">Pairs: 1</span></div>
<div class="p" style="left:77px;width:163px"><span class="sx">Start: 23.09.2005, 13:03:45</span></div>
<div class="p" style="left:244px;width:160px"><span class="sx">End: 23.09.2005, 13:04:05</span></div>
<div class="p" style="left:408px;width:136px"><span class="sx">Run time: 00:00:20</span></div>
<div class="p" style="left:548px;width:96px"><span class="sx">Ran to completion</span></div>
<!-- /STATUS -->
</div></body></html>
